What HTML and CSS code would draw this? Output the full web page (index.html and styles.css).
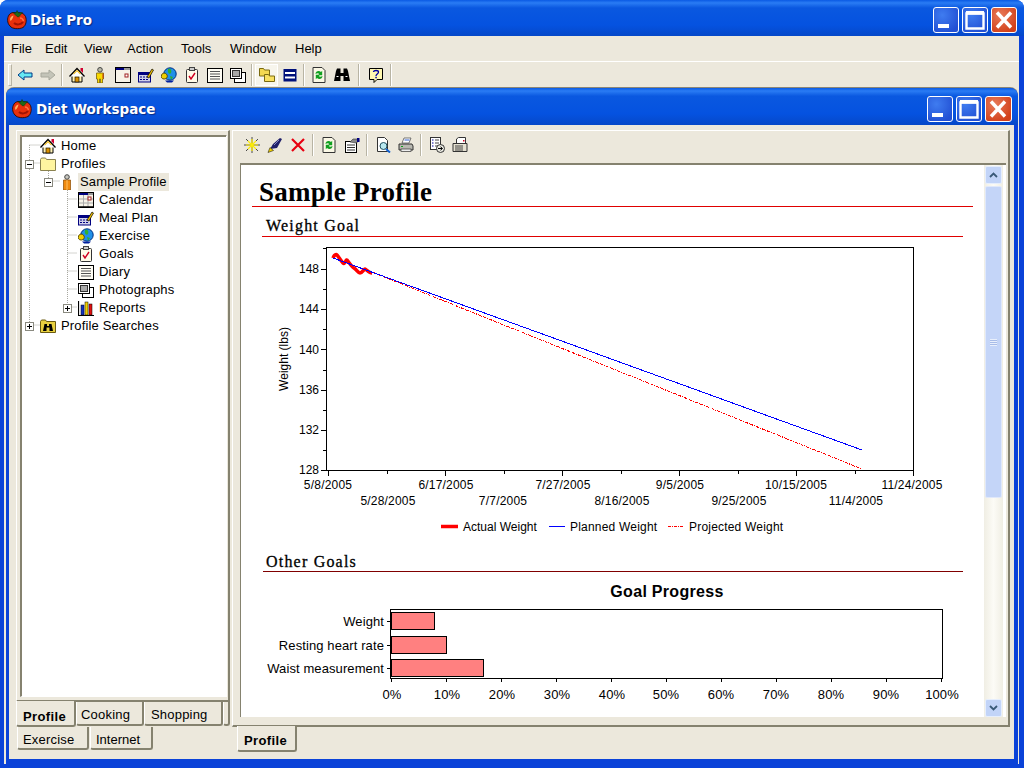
FILE: index.html
```html
<!DOCTYPE html>
<html lang="en">
<head>
<meta charset="utf-8">
<title>Diet Pro</title>
<link rel="stylesheet" href="styles.css">
</head>
<body>
<svg class="defs" width="0" height="0">
  <symbol id="i-tomato" viewBox="0 0 20 20"><path d="M10 3.500C8 2 4 2 2 5 0 8 0 13 3 16c2 3 9 3.500 13 1.500 3-2 4-7 2.500-11C17 3 12 2 10 3.500z" fill="#e8300c" stroke="#300800" stroke-width=".9"/><path d="M3 9c.5-2 1.500-3 3.500-3.500C6 8 5 10 3.500 11z" fill="#ffb060"/><path d="M7 13c2 2 7 2 9-1" fill="none" stroke="#a01404" stroke-width="2"/><path d="M13 8c1 0 3 1 3.500 3" fill="none" stroke="#ff7040" stroke-width="1.400"/><path d="M10 6.500 6 2.500l3 .5 1-2.500 1.500 2.500 4-.5-3 3.500-1 1z" fill="#1f6a18" stroke="#0c3008" stroke-width=".5"/></symbol>
  <symbol id="i-back" viewBox="0 0 16 16"><path d="M1 8 7 3v3h8v4H7v3z" fill="#66e8f4" stroke="#003a88"/></symbol>
  <symbol id="i-fwd" viewBox="0 0 16 16"><path d="M15 8 9 3v3H1v4h8v3z" fill="#c4c4b8" stroke="#a8a89c"/></symbol>
  <symbol id="i-home" viewBox="0 0 16 16"><path d="M3 8v7h10V8" fill="#fff2b8" stroke="#000"/><path d="M.5 9.500 8 1.500l7.500 8" fill="#fff" stroke="#000" stroke-width="1.300"/><path d="M11.500 1h2.500v5l-2.500-2.500z" fill="#d00030"/><rect x="6" y="10" width="4" height="5" fill="#d89000" stroke="#000" stroke-width=".6"/><path d="M4.500 7 8 3.500l3.500 3.500" fill="none" stroke="#f0c030" stroke-width="1.200"/></symbol>
  <symbol id="i-person" viewBox="0 0 16 16"><circle cx="8" cy="2.800" r="2.300" fill="#b8b8a8" stroke="#444"/><path d="M4.500 6h7v6h-1v4H8.500V12h-1v4h-2v-4h-1z" fill="#f8d800" stroke="#6a5000" stroke-width=".7"/><path d="M10.500 6.500h1v5h-1z" fill="#c03010"/></symbol>
  <symbol id="i-person2" viewBox="0 0 16 16"><circle cx="8" cy="3" r="2.300" fill="#c8c8c0" stroke="#444"/><path d="M4.500 6h7v10h-7z" fill="#f08a10" stroke="#8a4a00" stroke-width=".7"/><path d="M8 6v10" stroke="#ffc060"/></symbol>
  <symbol id="i-window" viewBox="0 0 16 16"><rect x=".5" y=".5" width="15" height="15" fill="#f7f3e8" stroke="#000"/><rect x="1" y="1" width="8" height="2" fill="#000080"/><rect x="9" y="1" width="6" height="2" fill="#999"/><rect x="10" y="7" width="3" height="3" fill="#fff" stroke="#a02020"/></symbol>
  <symbol id="i-calendar" viewBox="0 0 16 16"><rect x=".5" y=".5" width="15" height="15" fill="#f7f3e8" stroke="#000"/><rect x="1" y="1" width="9" height="2" fill="#000080"/><rect x="10" y="1" width="5" height="2" fill="#999"/><path d="M1 7h14M1 11h14M5.500 3v12M10 3v12" stroke="#aaa"/><rect x="10" y="5" width="3" height="3" fill="#fff" stroke="#a02020"/><path d="M1 15h15" stroke="#000" stroke-width="1.500"/></symbol>
  <symbol id="i-meal" viewBox="0 0 16 16"><rect x=".5" y="5.500" width="12" height="9.500" fill="#d0d0e8" stroke="#000080"/><rect x="1" y="6" width="11" height="2" fill="#000080"/><path d="M2 10h9M2 12.500h9" stroke="#000080" stroke-dasharray="2 1"/><path d="M9 10 14 2l1.500 1L11 11z" fill="#f0c000" stroke="#000" stroke-width=".7"/></symbol>
  <symbol id="i-globe" viewBox="0 0 16 16"><circle cx="9" cy="7" r="6.200" fill="#2090e8" stroke="#003080"/><path d="M7 2c3-1 4 2 3 4s-4 0-3-4zM9 9l3 1-2 3z" fill="#30b030"/><path d="M.5 8c1-2.500 4.500-2.500 5.500 0s-1 4-3 4-3.500-2-2.500-4z" fill="#f0d000" stroke="#5a4a00"/><path d="M4 13.500h9l-2 2H6z" fill="#0020a0"/></symbol>
  <symbol id="i-clip" viewBox="0 0 16 16"><rect x="2.500" y="2.500" width="11" height="13" rx="1" fill="#fffbe8" stroke="#333"/><rect x="5.500" y=".5" width="5" height="3" fill="#ccc" stroke="#444"/><path d="M5 9l2 3 4-6" fill="none" stroke="#d00020" stroke-width="1.400"/></symbol>
  <symbol id="i-diary" viewBox="0 0 16 16"><rect x=".5" y="1.500" width="15" height="14" fill="#fffdf4" stroke="#000"/><path d="M3 4.500h10M3 7h10M3 9.500h10M3 12h10" stroke="#555"/></symbol>
  <symbol id="i-photos" viewBox="0 0 16 16"><rect x="4.500" y="5.500" width="11" height="10" fill="#fff" stroke="#000"/><rect x=".5" y="1.500" width="11" height="10" fill="#fff" stroke="#000"/><rect x="2.500" y="3.500" width="7" height="6" fill="#a8a8a8" stroke="#333"/></symbol>
  <symbol id="i-folders" viewBox="0 0 16 16"><path d="M.5 7V1.500h4l1 1.500h5v6h-10z" fill="#f4d850" stroke="#7a6a10"/><path d="M5.500 14.500V7.500h4l1 1.500h5v5.500z" fill="#f8e060" stroke="#7a6a10"/></symbol>
  <symbol id="i-bars" viewBox="0 0 16 16"><rect x="1.500" y="2" width="13" height="12.500" fill="#00107a"/><rect x="3" y="5" width="10" height="2" fill="#fff"/><rect x="3" y="9.500" width="10" height="2" fill="#fff"/></symbol>
  <symbol id="i-refresh" viewBox="0 0 16 16"><path d="M2 .5h9l3 3v12H2z" fill="#fbf8e6" stroke="#333"/><path d="M4.500 7c0-3 3.500-4 5.500-2l1.200-1.200v4.500H7l1.300-1.300c-1-1-2.300-.8-3.800 0z" fill="#10a020"/><path d="M11.500 9c0 3-3.500 4-5.500 2l-1.200 1.200V7.800H9L7.700 9.100c1 1 2.300.8 3.800 0z" fill="#10a020"/></symbol>
  <symbol id="i-binoc" viewBox="0 0 16 16"><path d="M0 14 2 4 3 1.500h3.500V6h3V1.500H13L14 4l2 10H9.500V9h-3v5z" fill="#000"/><path d="M2.500 9.500h2M11.500 9.500h2" stroke="#fff"/></symbol>
  <symbol id="i-folder" viewBox="0 0 16 16"><path d="M.5 14.500V3.500l1-1.500h4l1 1.500h9v11z" fill="#fff5a0" stroke="#8a8250"/></symbol>
  <symbol id="i-search" viewBox="0 0 16 16"><path d="M.5 14.500V3.500l1-1.500h4l1 1.500h9v11z" fill="#e8d040" stroke="#6a5a10"/><path d="M3 13 4.500 6h2.500v2h2V6h2.500L13 13H9.500V9.500h-3V13z" fill="#000"/></symbol>
  <symbol id="i-reports" viewBox="0 0 16 16"><path d="M.5 1v14.500H16" fill="none" stroke="#000" stroke-width="1.200"/><rect x="3" y="5" width="3" height="10" fill="#1030c0" stroke="#000" stroke-width=".5"/><rect x="7" y="2" width="3" height="13" fill="#f0d000" stroke="#000" stroke-width=".5"/><rect x="11" y="4" width="3" height="11" fill="#e01010" stroke="#000" stroke-width=".5"/></symbol>
  <symbol id="i-help" viewBox="0 0 16 16"><path d="M1.500 1.500h13v11H9l-3 3v-3H1.500z" fill="#fff8b0" stroke="#000"/><path d="M5.500 5c0-2 5-2 5 0 0 2-2.500 2-2.500 4" fill="none" stroke="#0000a0" stroke-width="1.300"/><rect x="7.300" y="9.800" width="1.500" height="1.500" fill="#0000a0"/></symbol>
  <symbol id="i-star" viewBox="0 0 16 16"><path d="M8 0v16M0 8h16M2 2l12 12M14 2 2 14" stroke="#222" stroke-width=".8"/><path d="M8 2v12M2 8h12M4 4l8 8M12 4l-8 8" stroke="#ffee00" stroke-width="1.200"/></symbol>
  <symbol id="i-pen" viewBox="0 0 16 16"><path d="M3 12 6 7l7-6 2 1-5 9z" fill="#20206a"/><path d="M1 15.500l2-5 3.500 3z" fill="#f0d000" stroke="#000" stroke-width=".5"/><path d="M7 8l5-5" stroke="#8888c0"/></symbol>
  <symbol id="i-del" viewBox="0 0 16 16"><path d="M2 2 14 14M14 2 2 14" stroke="#e80010" stroke-width="2.200"/></symbol>
  <symbol id="i-props" viewBox="0 0 16 16"><rect x="1.500" y="4.500" width="11" height="11" fill="#fff" stroke="#000"/><path d="M3 8h8M3 10.500h8M3 13h8" stroke="#333"/><path d="M6 5 9 2l5 0 1 2-3 2z" fill="#888" stroke="#333" stroke-width=".6"/><rect x="13" y="1" width="2.500" height="4" fill="#000080"/></symbol>
  <symbol id="i-preview" viewBox="0 0 16 16"><path d="M2.500 .5h7l3 3v11h-10z" fill="#fff" stroke="#333"/><circle cx="8.500" cy="9" r="3.500" fill="#b8e8f0" stroke="#205060"/><path d="M11 12l4 3.500" stroke="#1060d0" stroke-width="2"/></symbol>
  <symbol id="i-print" viewBox="0 0 16 16"><path d="M4 6 6 1h7l-2 5z" fill="#fff" stroke="#444" stroke-width=".7"/><path d="M6.500 3h5" stroke="#3060d0"/><path d="M1 7h13l1 2v4H1z" fill="#b8b8b0" stroke="#333"/><rect x="3" y="12" width="10" height="2.500" fill="#eee" stroke="#333" stroke-width=".7"/><rect x="3" y="9" width="2" height="1" fill="#10a020"/></symbol>
  <symbol id="i-export" viewBox="0 0 16 16"><rect x="1.500" y=".5" width="10" height="12" fill="#fff" stroke="#333"/><path d="M3 3h1.500M3 6h1.500M3 9h1.500" stroke="#0000a0"/><path d="M6 3h4M6 6h4M6 9h3" stroke="#444"/><circle cx="11.500" cy="11.500" r="4" fill="#e8e8e0" stroke="#333"/><path d="M9 11.500h4M11.500 9.800l2 1.700-2 1.700" fill="none" stroke="#000"/></symbol>
  <symbol id="i-fax" viewBox="0 0 16 16"><path d="M4.500 6V2l2-1.500h7V6" fill="#fff" stroke="#333"/><rect x="11" y="3" width="1.500" height="1.500" fill="#d00020"/><path d="M1 6.500h14v8H1z" fill="#e4e0d0" stroke="#333"/><path d="M3 9h8M3 11h8M3 13h8" stroke="#444"/></symbol>
  <symbol id="i-minus" viewBox="0 0 9 9"><rect x=".5" y=".5" width="8" height="8" fill="#fff" stroke="#8a8a80"/><path d="M2 4.500h5" stroke="#000"/></symbol>
  <symbol id="i-plus" viewBox="0 0 9 9"><rect x=".5" y=".5" width="8" height="8" fill="#fff" stroke="#8a8a80"/><path d="M2 4.500h5M4.500 2v5" stroke="#000"/></symbol>
  <symbol id="i-min" viewBox="0 0 24 24"><rect x="4" y="16" width="11" height="4" fill="#fff"/></symbol>
  <symbol id="i-max" viewBox="0 0 24 24"><path d="M3.500 5.500h17v15h-17z" fill="none" stroke="#fff" stroke-width="2.400"/><rect x="3" y="3" width="18" height="3.500" fill="#fff"/></symbol>
  <symbol id="i-close" viewBox="0 0 24 24"><path d="M5 4.500 19 19.500M19 4.500 5 19.500" stroke="#fff" stroke-width="3.400"/></symbol>
  <symbol id="i-up" viewBox="0 0 9 6"><path d="M1 5 4.500 1.500 8 5" fill="none" stroke="#3a5a78" stroke-width="1.800"/></symbol>
  <symbol id="i-down" viewBox="0 0 9 6"><path d="M1 1 4.500 4.500 8 1" fill="none" stroke="#3a5a78" stroke-width="1.800"/></symbol>
</svg>

<div class="app">
  <header class="title outer-title">
    <svg class="tomato"><use href="#i-tomato"/></svg>
    <span class="title-text">Diet Pro</span>
    <div class="caption-btns">
      <span class="cap"><svg><use href="#i-min"/></svg></span>
      <span class="cap"><svg><use href="#i-max"/></svg></span>
      <span class="cap cap-close"><svg><use href="#i-close"/></svg></span>
    </div>
  </header>
  <div class="client">
    <nav class="menubar">
      <span>File</span><span>Edit</span><span>View</span><span>Action</span><span>Tools</span><span>Window</span><span>Help</span>
    </nav>
    <div class="toolbar main-tools">
      <span class="grip"></span>
      <span class="tb"><svg><use href="#i-back"/></svg></span>
      <span class="tb"><svg><use href="#i-fwd"/></svg></span>
      <span class="sep"></span>
      <span class="tb"><svg><use href="#i-home"/></svg></span>
      <span class="tb"><svg><use href="#i-person"/></svg></span>
      <span class="tb"><svg><use href="#i-window"/></svg></span>
      <span class="tb"><svg><use href="#i-meal"/></svg></span>
      <span class="tb"><svg><use href="#i-globe"/></svg></span>
      <span class="tb"><svg><use href="#i-clip"/></svg></span>
      <span class="tb"><svg><use href="#i-diary"/></svg></span>
      <span class="tb"><svg><use href="#i-photos"/></svg></span>
      <span class="sep"></span>
      <span class="tb tb-on"><svg><use href="#i-folders"/></svg></span>
      <span class="tb"><svg><use href="#i-bars"/></svg></span>
      <span class="sep"></span>
      <span class="tb"><svg><use href="#i-refresh"/></svg></span>
      <span class="tb"><svg><use href="#i-binoc"/></svg></span>
      <span class="sep sep-wide"></span>
      <span class="tb"><svg><use href="#i-help"/></svg></span>
      <span class="sep sep-end"></span>
    </div>

    <section class="win">
      <header class="title inner-title">
        <svg class="tomato"><use href="#i-tomato"/></svg>
        <span class="title-text">Diet Workspace</span>
        <div class="caption-btns">
          <span class="cap"><svg><use href="#i-min"/></svg></span>
          <span class="cap"><svg><use href="#i-max"/></svg></span>
          <span class="cap cap-close"><svg><use href="#i-close"/></svg></span>
        </div>
      </header>
      <div class="win-body">
        <aside class="left">
          <div class="left-frame">
            <div class="tree">
              <svg class="tree-lines" width="205" height="200">
                <path d="M7.500 9v180M7.500 9h11M7.500 27h11M7.500 189h11M26.500 27v18M26.500 45h11M45.500 54v117M45.500 63h10M45.500 81h10M45.500 99h10M45.500 117h10M45.500 135h10M45.500 153h10M45.500 171h10"/>
              </svg>
              <div class="row l0"><span class="slot"></span><svg class="ti"><use href="#i-home"/></svg><span class="lbl">Home</span></div>
              <div class="row l0"><span class="slot"><svg class="exp"><use href="#i-minus"/></svg></span><svg class="ti"><use href="#i-folder"/></svg><span class="lbl">Profiles</span></div>
              <div class="row l1"><span class="slot"><svg class="exp"><use href="#i-minus"/></svg></span><svg class="ti"><use href="#i-person2"/></svg><span class="lbl lbl-sel">Sample Profile</span></div>
              <div class="row l2"><span class="slot"></span><svg class="ti"><use href="#i-calendar"/></svg><span class="lbl">Calendar</span></div>
              <div class="row l2"><span class="slot"></span><svg class="ti"><use href="#i-meal"/></svg><span class="lbl">Meal Plan</span></div>
              <div class="row l2"><span class="slot"></span><svg class="ti"><use href="#i-globe"/></svg><span class="lbl">Exercise</span></div>
              <div class="row l2"><span class="slot"></span><svg class="ti"><use href="#i-clip"/></svg><span class="lbl">Goals</span></div>
              <div class="row l2"><span class="slot"></span><svg class="ti"><use href="#i-diary"/></svg><span class="lbl">Diary</span></div>
              <div class="row l2"><span class="slot"></span><svg class="ti"><use href="#i-photos"/></svg><span class="lbl">Photographs</span></div>
              <div class="row l2"><span class="slot"><svg class="exp"><use href="#i-plus"/></svg></span><svg class="ti"><use href="#i-reports"/></svg><span class="lbl">Reports</span></div>
              <div class="row l0"><span class="slot"><svg class="exp"><use href="#i-plus"/></svg></span><svg class="ti"><use href="#i-search"/></svg><span class="lbl">Profile Searches</span></div>
            </div>
          </div>
          <div class="tabs tabs-1">
            <span class="tab tab-on">Profile</span>
            <span class="tab tab-cook">Cooking</span>
            <span class="tab tab-shop">Shopping</span>
            <span class="tab tab-blank"></span>
          </div>
          <div class="tabs tabs-2">
            <span class="tab tab-ex">Exercise</span>
            <span class="tab tab-net">Internet</span>
          </div>
        </aside>
        <main class="right">
          <div class="right-frame">
            <div class="toolbar doc-tools">
              <span class="tb"><svg><use href="#i-star"/></svg></span>
              <span class="tb"><svg><use href="#i-pen"/></svg></span>
              <span class="tb"><svg><use href="#i-del"/></svg></span>
              <span class="sep"></span>
              <span class="tb"><svg><use href="#i-refresh"/></svg></span>
              <span class="tb"><svg><use href="#i-props"/></svg></span>
              <span class="sep"></span>
              <span class="tb"><svg><use href="#i-preview"/></svg></span>
              <span class="tb"><svg><use href="#i-print"/></svg></span>
              <span class="sep"></span>
              <span class="tb"><svg><use href="#i-export"/></svg></span>
              <span class="tb"><svg><use href="#i-fax"/></svg></span>
            </div>
            <div class="pane">
              <article class="doc">
                <h1>Sample Profile</h1>
                <h2>Weight Goal</h2>
                <svg class="chart chart-weight" viewBox="241 237 743 302" width="743" height="302">
                  <rect class="axis" x="326.500" y="247.500" width="587" height="223"/>
                  <path class="tick" d="M321 269.500h5M321 309.500h5M321 349.500h5M321 390.500h5M321 430.500h5M321 470.500h5M323 248.500h3M323 289.500h3M323 329.500h3M323 370.500h3M323 410.500h3M323 450.500h3M328.500 471v5M387.500 471v3M445.500 471v5M504.500 471v3M562.500 471v5M621.500 471v3M679.500 471v5M738.500 471v3M796.500 471v5M855.500 471v3M913.500 471v5"/>
                  <g class="lab lab-end">
                    <text x="319" y="273">148</text><text x="319" y="313">144</text><text x="319" y="354">140</text><text x="319" y="394">136</text><text x="319" y="434">132</text><text x="319" y="474">128</text>
                  </g>
                  <text class="lab lab-mid" transform="translate(288 359) rotate(-90)">Weight (lbs)</text>
                  <g class="lab lab-wide lab-mid">
                    <text x="328" y="489">5/8/2005</text><text x="446" y="489">6/17/2005</text><text x="563" y="489">7/27/2005</text><text x="680" y="489">9/5/2005</text><text x="796" y="489">10/15/2005</text><text x="912" y="489">11/24/2005</text>
                    <text x="388" y="505">5/28/2005</text><text x="503" y="505">7/7/2005</text><text x="622" y="505">8/16/2005</text><text x="739" y="505">9/25/2005</text><text x="856" y="505">11/4/2005</text>
                  </g>
                  <path class="s-proj" d="M372 272 862 469"/>
                  <path class="s-act" d="M333 258C334 255 336 254 337 255S341 261 343 263 346 259 347 260 351 266 354 268 358 273 360 273 364 269 365 269 369 273 372 273"/>
                  <path class="s-plan" d="M333 258 862 450"/>
                  <path class="s-act" d="M441 526.500h17"/>
                  <text class="lab" x="463" y="531">Actual Weight</text>
                  <path class="s-plan" d="M549 526.500h16"/>
                  <text class="lab lab-wide" x="570" y="531">Planned Weight</text>
                  <path class="s-proj" d="M668 526.500h16"/>
                  <text class="lab lab-wide" x="689" y="531">Projected Weight</text>
                </svg>
                <h2 class="h2-dark">Other Goals</h2>
                <svg class="chart chart-goals" viewBox="241 572 743 146" width="743" height="146">
                  <text class="chart-title" x="667" y="597">Goal Progress</text>
                  <rect class="axis" x="390.500" y="609.500" width="552" height="69"/>
                  <rect class="bar" x="391.500" y="612.500" width="43" height="17"/>
                  <rect class="bar" x="391.500" y="636.500" width="55" height="17"/>
                  <rect class="bar" x="391.500" y="659.500" width="92" height="17"/>
                  <path class="tick" d="M387 621.500h3M387 645.500h3M387 668.500h3M391.500 679v3M446.500 679v3M501.500 679v3M556.500 679v3M611.500 679v3M666.500 679v3M721.500 679v3M776.500 679v3M831.500 679v3M886.500 679v3M941.500 679v3"/>
                  <g class="lab lab-big lab-end">
                    <text x="384" y="626">Weight</text><text x="384" y="650">Resting heart rate</text><text x="384" y="673">Waist measurement</text>
                  </g>
                  <g class="lab lab-big lab-mid">
                    <text x="392" y="699">0%</text><text x="447" y="699">10%</text><text x="502" y="699">20%</text><text x="557" y="699">30%</text><text x="612" y="699">40%</text><text x="666" y="699">50%</text><text x="721" y="699">60%</text><text x="776" y="699">70%</text><text x="831" y="699">80%</text><text x="886" y="699">90%</text><text x="942" y="699">100%</text>
                  </g>
                </svg>
              </article>
              <div class="scrollbar">
                <span class="sb-btn"><svg><use href="#i-up"/></svg></span>
                <span class="sb-thumb"><span class="sb-grip"></span></span>
                <span class="sb-track"></span>
                <span class="sb-btn"><svg><use href="#i-down"/></svg></span>
              </div>
            </div>
          </div>
          <div class="tabs tabs-doc"><span class="tab tab-on tab-doc">Profile</span></div>
        </main>
      </div>
    </section>
  </div>
</div>
</body>
</html>
```
FILE: styles.css
```css
* { box-sizing: border-box; }
html, body { margin: 0; padding: 0; background: #fff; }
body { font: 13px "Liberation Sans", Arial, sans-serif; color: #000; overflow: hidden; }
.defs { position: absolute; }

.app {
  width: 1024px; height: 768px; display: flex; flex-direction: column;
  background: #0a42d8; border-radius: 8px 8px 0 0; overflow: hidden;
}
.title {
  display: flex; align-items: center; flex: none; padding-top: 4px;
  background: linear-gradient(#0a5ae4 0, #2a7cf4 8%, #0a58e0 22%, #0552e0 70%, #0648c8 100%);
}
.outer-title { height: 36px; padding-left: 7px; padding-right: 7px; }
.inner-title { height: 37px; padding-left: 6px; padding-right: 6px; border-radius: 8px 8px 0 0; }
.tomato { width: 20px; height: 20px; flex: none; }
.title-text {
  margin-left: 3px; color: #fff; font: bold 13.500px "DejaVu Sans", sans-serif;
  text-shadow: 1px 1px 1px #0a2a80;
}
.inner-title .title-text { margin-left: 4px; }
.caption-btns { margin-left: auto; display: flex; gap: 3px; }
.cap {
  width: 26px; height: 26px; border: 1px solid #fff; border-radius: 3px; display: block;
  background: radial-gradient(circle at 35% 30%, #3f7cf0, #2250d4 80%);
}
.cap svg { display: block; width: 24px; height: 24px; }
.cap-close { background: radial-gradient(circle at 35% 30%, #e87a58, #d2401a 80%); }
.inner-title .cap-close { width: 27px; }

.client {
  flex: 1; min-height: 0; margin: 0 5px 4px 4px; background: #ece8dc;
  display: flex; flex-direction: column;
}
.menubar {
  height: 26px; flex: none; display: grid; align-items: center;
  grid-template-columns: 34px 39px 43px 54px 49px 65px auto;
  padding: 0 0 1px 7px; border-bottom: 1px solid #fff;
}
.toolbar { display: flex; align-items: center; }
.main-tools { height: 26px; flex: none; padding-left: 4px; }
.grip { width: 4px; height: 22px; border: 1px solid #b8b4a4; border-top-color: #fff; border-left-color: #fff; margin-right: 1px; flex: none; }
.tb { width: 23px; height: 22px; display: flex; align-items: center; justify-content: center; flex: none; }
.tb svg { width: 16px; height: 16px; display: block; }
.tb-on { background: #f7f5ec; border: 1px solid #fff; }
.sep { width: 2px; height: 22px; margin: 0 2px; background: #b8b4a4; border-right: 1px solid #fff; flex: none; }
.sep-wide { margin: 0 4px 0 5px; }
.sep-end { margin-left: 3px; }

.win {
  flex: 1; min-height: 0; margin: 0 1px 0 2px; background: #0a42d8;
  border-radius: 8px 8px 0 0; display: flex; flex-direction: column;
  box-shadow: 0 -1px 0 #8a8678;
}
.win-body { flex: 1; min-height: 0; margin: 0 4px 5px 3px; background: #ece8dc; display: flex; padding: 5px 4px 0 7px; gap: 2px; }

.left { width: 214px; flex: none; display: flex; flex-direction: column; }
.left-frame {
  height: 572px; flex: none; padding: 4px 1px 3px 3px;
  border-top: 1px solid #fff; border-left: 1px solid #fff;
  border-right: 2px solid #85826f; border-bottom: 2px solid #85826f;
}
.tree {
  position: relative; height: 100%; background: #fff; padding-top: 1px;
  border-top: 1px solid #85826f; border-left: 2px solid #85826f;
  border-right: 1px solid #fff; border-bottom: 1px solid #fff;
  box-shadow: inset 0 1px 0 #85826f;
}
.tree-lines { position: absolute; left: 0; top: 0; }
.tree-lines path { fill: none; stroke: #a8a8a0; stroke-dasharray: 1 1; }
.row { position: relative; height: 18px; display: flex; align-items: center; letter-spacing: .15px; }
.l0 { padding-left: 3px; }
.l1 { padding-left: 22px; }
.l2 { padding-left: 41px; }
.slot { width: 15px; height: 18px; flex: none; display: flex; align-items: center; }
.exp { width: 9px; height: 9px; display: block; }
.ti { width: 16px; height: 16px; flex: none; }
.lbl { margin-left: 3px; padding: 0 2px; height: 18px; line-height: 18px; }
.lbl-sel { background: #ece8dc; }

.tabs { display: flex; flex: none; }
.tab {
  display: flex; align-items: center; padding-left: 4px;
  border-right: 2px solid #85826f; border-bottom: 2px solid #85826f; border-left: 1px solid #fff;
  border-radius: 0 0 3px 3px; background: #ece8dc;
}
.tab-on { font-weight: bold; letter-spacing: .4px; border-bottom: 2px solid #85826f; padding-left: 6px; }
.tabs-1 { height: 26px; align-items: flex-start; }
.tabs-1 .tab { height: 24px; padding-top: 3px; }
.tabs-1 .tab-on { width: 60px; height: 26px; margin-top: -1px; padding-top: 7px; position: relative; }
.tab-cook { width: 68px; letter-spacing: .2px; }
.tab-shop { width: 79px; padding-left: 6px; letter-spacing: .2px; }
.tab-blank { width: 7px; padding: 0; }
.tabs-2 { height: 24px; margin-top: -1px; padding-left: 1px; gap: 1px; }
.tab-ex { width: 72px; height: 23px; padding-left: 5px; padding-top: 3px; letter-spacing: .2px; }
.tab-net { width: 63px; height: 23px; padding-left: 5px; padding-top: 3px; }

.right { width: 778px; flex: none; display: flex; flex-direction: column; }
.right-frame {
  height: 597px; flex: none; padding: 0 2px 8px 7px; display: flex; flex-direction: column;
  border-top: 1px solid #fff; border-left: 1px solid #fff;
  border-right: 2px solid #85826f; border-bottom: 2px solid #85826f;
}
.doc-tools { height: 32px; flex: none; padding-bottom: 4px; }
.doc-tools .sep { margin: 0 3px; }
.pane {
  flex: 1; min-height: 0; display: flex; background: #fff; overflow: hidden;
  border-top: 2px solid #85826f; border-left: 1px solid #85826f;
  padding-right: 3px;
}
.doc { width: 743px; flex: none; overflow: hidden; }
h1 {
  margin: 13px 11px 0; height: 29px; padding: 0 0 0 7px; font: bold 27px/28px "Liberation Serif", serif;
  border-bottom: 1px solid #e00000; letter-spacing: .25px;
}
h2 {
  margin: 10px 21px 0; height: 20px; padding: 0 0 0 4px; font: normal 16px/18px "Liberation Serif", serif;
  letter-spacing: 1.200px; border-bottom: 1px solid #e00000;
  -webkit-text-stroke: .3px #000;
}
.h2-dark { margin: 12px 21px 0 22px; padding-left: 3px; border-bottom-color: #800000; height: 21px; line-height: 22px; }
.chart { display: block; }
.axis { fill: #fff; stroke: #000; }
.tick { fill: none; stroke: #000; }
.lab { font: 12px "Liberation Sans", sans-serif; fill: #000; }
.lab-wide { letter-spacing: .2px; }
.lab-big { font-size: 13px; letter-spacing: .1px; }
.lab-end { text-anchor: end; }
.lab-mid { text-anchor: middle; }
.chart-title { font: bold 16px "Liberation Sans", sans-serif; letter-spacing: .3px; text-anchor: middle; fill: #000; }
.s-act { fill: none; stroke: #ff0000; stroke-width: 3.500; stroke-linejoin: round; }
.s-plan { fill: none; stroke: #0000ff; stroke-width: 1; shape-rendering: crispEdges; }
.s-proj { fill: none; stroke: #ff0000; stroke-width: 1; stroke-dasharray: 3 1 1 1; shape-rendering: crispEdges; }
.bar { fill: #ff8080; stroke: #000; }

.scrollbar {
  width: 19px; flex: none; display: flex; flex-direction: column; align-items: center; padding-top: 1px;
  background: linear-gradient(90deg, #f0eee4, #fcfbf6 50%, #f0eee4);
}
.sb-btn {
  width: 17px; height: 18px; flex: none; display: flex; align-items: center; justify-content: center;
  background: #c2d4f8; border: 1px solid #e6eefc; border-radius: 2px;
}
.sb-btn svg { width: 9px; height: 6px; display: block; }
.sb-thumb {
  width: 17px; height: 312px; margin-top: 2px; flex: none; display: flex; align-items: center; justify-content: center;
  background: #c4d5f8; border: 1px solid #e0e8fa; border-radius: 2px;
}
.sb-grip { width: 7px; height: 7px; background: repeating-linear-gradient(#e8effc 0 1px, #a8bce8 1px 2px); }
.sb-track { flex: 1; }

.tabs-doc { padding-left: 5px; margin-top: -1px; }
.tab-doc { width: 60px; height: 26px; position: relative; padding-top: 5px; }
```
